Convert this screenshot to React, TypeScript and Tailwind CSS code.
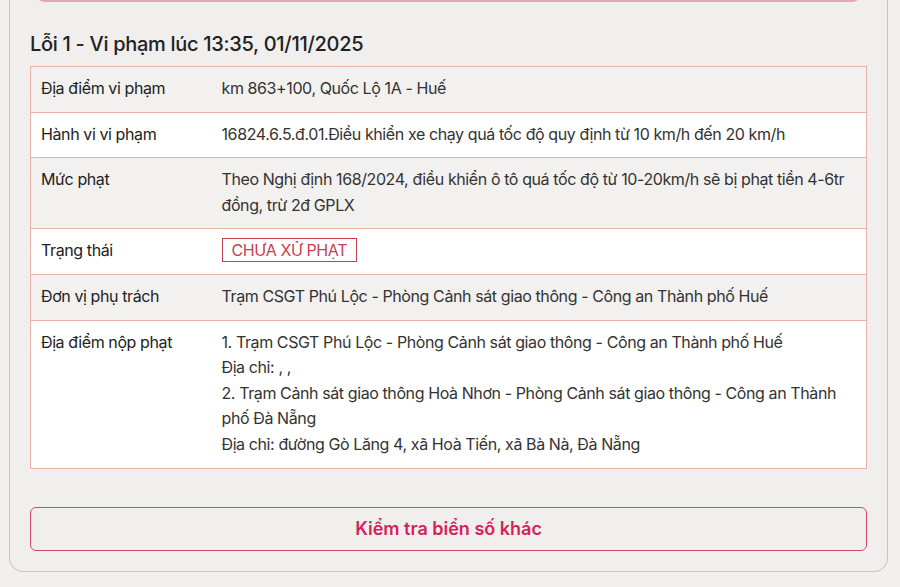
import React from 'react';

const rows: { label: string; value: React.ReactNode }[] = [
  { label: 'Địa điểm vi phạm', value: 'km 863+100, Quốc Lộ 1A - Huế' },
  {
    label: 'Hành vi vi phạm',
    value: '16824.6.5.đ.01.Điều khiển xe chạy quá tốc độ quy định từ 10 km/h đến 20 km/h',
  },
  {
    label: 'Mức phạt',
    value:
      'Theo Nghị định 168/2024, điều khiển ô tô quá tốc độ từ 10-20km/h sẽ bị phạt tiền 4-6tr đồng, trừ 2đ GPLX',
  },
  {
    label: 'Trạng thái',
    value: (
      <span className="inline-block border border-[#c4404f] px-[9px] leading-[22px] text-[#c8404f]">
        CHƯA XỬ PHẠT
      </span>
    ),
  },
  {
    label: 'Đơn vị phụ trách',
    value: 'Trạm CSGT Phú Lộc - Phòng Cảnh sát giao thông - Công an Thành phố Huế',
  },
  {
    label: 'Địa điểm nộp phạt',
    value: (
      <>
        <div>1. Trạm CSGT Phú Lộc - Phòng Cảnh sát giao thông - Công an Thành phố Huế</div>
        <div>Địa chỉ: , ,</div>
        <div>
          2. Trạm Cảnh sát giao thông Hoà Nhơn - Phòng Cảnh sát giao thông - Công an Thành phố Đà
          Nẵng
        </div>
        <div>Địa chỉ: đường Gò Lăng 4, xã Hoà Tiến, xã Bà Nà, Đà Nẵng</div>
      </>
    ),
  },
];

export default function App() {
  return (
    <div
      className="min-h-screen overflow-hidden bg-[#f1f0ee] pr-[12px] pl-[9px] text-[#222]"
      style={{ fontFamily: 'Inter, "Noto Sans", sans-serif' }}
    >
      <div className="-mt-[20px] rounded-b-[14px] border-[1.5px] border-t-0 border-[#c9c7bd] bg-[#f0efed] px-5 pb-5">
        {/* bottom of the previous box */}
        <div className="mx-[5px] h-[22px] rounded-b-[10px] border-b-[3px] border-[#e8a4b4]" />

        <h2 className="mt-7 mb-2 text-xl leading-7 font-medium tracking-[-0.3px]">
          Lỗi 1 - Vi phạm lúc 13:35, 01/11/2025
        </h2>

        <table className="w-full border-collapse border border-[#ecb2aa] text-base leading-[1.6] tracking-[-0.4px]">
          <tbody>
            {rows.map((row, i) => (
              <tr key={row.label} className={i % 2 === 0 ? 'bg-[#f2f1ef]' : 'bg-white'}>
                <td className="w-[181px] border-t border-[#ecb2aa] px-2.5 pt-[9px] pb-[10px] align-top text-[#222]">
                  {row.label}
                </td>
                <td className="border-t border-[#ecb2aa] px-2.5 pt-[9px] pb-[10px] align-top text-[#333]">
                  {row.value}
                </td>
              </tr>
            ))}
          </tbody>
        </table>

        <button className="mt-[38px] flex h-[44px] w-full items-center justify-center rounded-md border border-[#d4476b] text-lg font-semibold text-[#d81e5b]">
          Kiểm tra biển số khác
        </button>
      </div>
    </div>
  );
}
